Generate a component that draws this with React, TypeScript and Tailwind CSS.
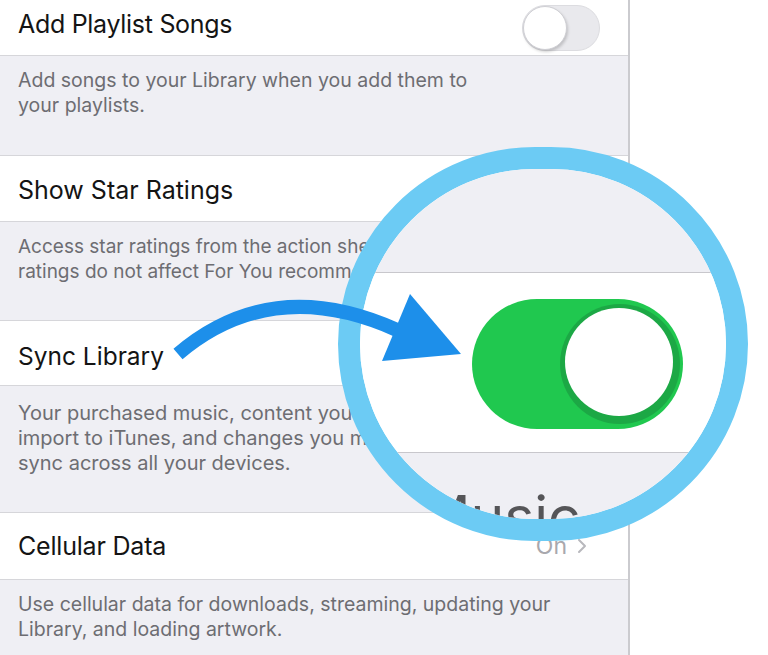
import React from "react";

function OffSwitch() {
  return (
    <div className="relative h-[46px] w-[78px] rounded-full border border-[#dcdce0] bg-[#e9e9ed]">
      <div className="absolute left-0 top-0 h-[44px] w-[44px] rounded-full border border-[#cfcfd4] bg-white shadow-[1px_2px_3px_rgba(0,0,0,0.18)]" />
    </div>
  );
}

export default function App() {
  return (
    <div className="relative h-[655px] w-[768px] overflow-hidden bg-white font-['Inter','Noto_Sans',sans-serif]">
      {/* settings panel */}
      <div className="flex h-full w-[630px] flex-col overflow-hidden border-r-2 border-[#cbcbcf] bg-[#efeff4]">
        <div className="flex h-[56px] shrink-0 items-center justify-between border-b border-[#d6d6da] bg-white pl-[18px] pr-[28px]">
          <span className="pb-[7px] text-[25px] leading-[25px] tracking-[-0.3px] text-[#141414]">Add Playlist Songs</span>
          <OffSwitch />
        </div>
        <div className="h-[99px] shrink-0 whitespace-nowrap pl-[18px] pt-[12px] text-[19.5px] leading-[25px] text-[#6d6d72]">
          Add songs to your Library when you add them to
          <br />
          your playlists.
        </div>

        <div className="flex h-[67px] shrink-0 items-center border-y border-[#d6d6da] bg-white pl-[18px] pt-[3px]">
          <span className="text-[25px] leading-[25px] text-[#141414]">Show Star Ratings</span>
        </div>
        <div className="h-[98px] shrink-0 whitespace-nowrap pl-[18px] pt-[12px] text-[19px] leading-[25px] text-[#6d6d72]">
          Access star ratings from the action sheet. Star
          <br />
          ratings do not affect For You recommendations.
        </div>

        <div className="flex h-[66px] shrink-0 items-center border-y border-[#d6d6da] bg-white pl-[18px] pt-[6px]">
          <span className="text-[24.5px] leading-[25px] text-[#141414]">Sync Library</span>
        </div>
        <div className="h-[126px] shrink-0 whitespace-nowrap pl-[18px] pt-[15px] text-[20px] leading-[25px] text-[#6d6d72]">
          Your purchased music, content you add from Apple
          <br />
          import to iTunes, and changes you make to your
          <br />
          sync across all your devices.
        </div>

        <div className="flex h-[68px] shrink-0 items-center justify-between border-y border-[#d6d6da] bg-white pl-[18px] pr-[41px]">
          <span className="text-[25px] leading-[25px] tracking-[-0.2px] text-[#141414]">Cellular Data</span>
          <span className="flex items-center gap-[10px] text-[23px] leading-[25px] text-[#a8a8ad]">
            On
            <svg width="10" height="16" viewBox="0 0 10 16" fill="none">
              <path d="M2 2 L8 8 L2 14" stroke="#b8b8bd" strokeWidth="2" strokeLinecap="round" strokeLinejoin="round" />
            </svg>
          </span>
        </div>
        <div className="flex-1 whitespace-nowrap pl-[18px] pt-[12px] text-[19.5px] leading-[25px] text-[#6d6d72]">
          Use cellular data for downloads, streaming, updating your
          <br />
          Library, and loading artwork.
        </div>
      </div>

      {/* magnifier circle */}
      <div className="absolute left-[338px] top-[147px] h-[394px] w-[410px] overflow-hidden rounded-full border-[22px] border-[#6ccbf4] bg-white">
        <div className="flex h-full flex-col">
          <div className="h-[103px] shrink-0 bg-[#efeff4]" />
          <div className="h-px shrink-0 bg-[#c8c7cc]" />
          <div className="h-[179px] shrink-0 bg-white pl-[112px] pt-[26px]">
            <div className="relative h-[130px] w-[211px] rounded-full bg-[#20c84f]">
              <div className="absolute right-[3px] top-[5px] h-[120px] w-[120px] rounded-full bg-[#1ca845]">
                <div className="ml-[5px] mt-[4px] h-[108px] w-[108px] rounded-full bg-white" />
              </div>
            </div>
          </div>
          <div className="h-px shrink-0 bg-[#c8c7cc]" />
          <div className="flex-1 whitespace-nowrap bg-[#efeff4] pl-[59px] pt-[35px]">
            <span className="text-[57px] leading-[57px] text-[#555558]">Music</span>
          </div>
        </div>
      </div>

      {/* arrow */}
      <svg className="pointer-events-none absolute left-0 top-0" width="768" height="655" viewBox="0 0 768 655">
        <path d="M178 354 Q272 274 397 330" stroke="#1d8fea" strokeWidth="14" fill="none" />
        <polygon points="410,294 382,361 461,354" fill="#1d8fea" />
      </svg>
    </div>
  );
}
